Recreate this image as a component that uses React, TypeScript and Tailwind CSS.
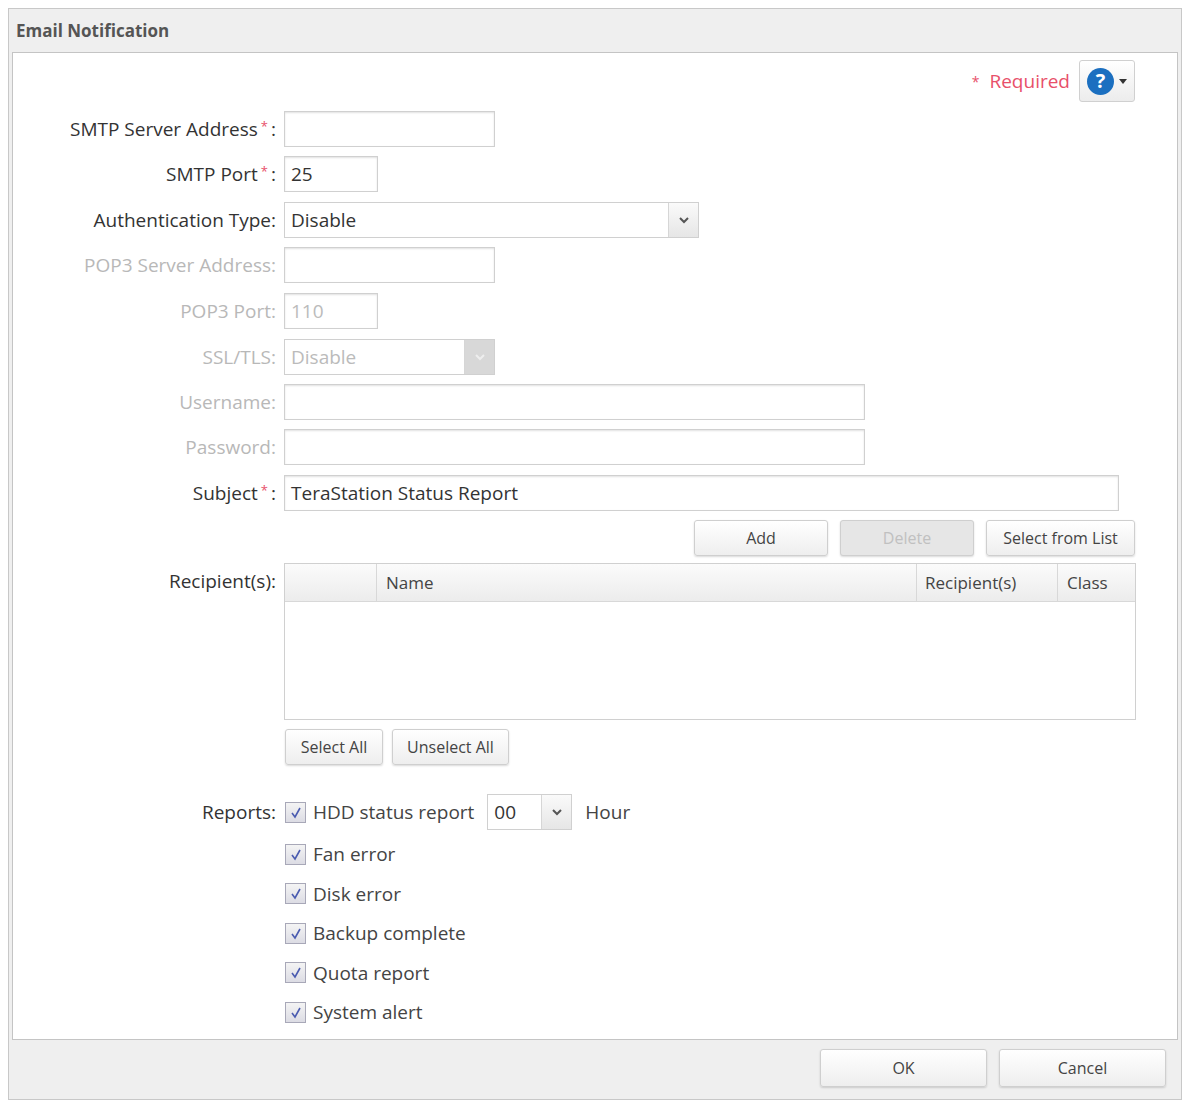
import React from "react";

const F = { fontFamily: '"Open Sans", "DejaVu Sans", sans-serif' };

function Label({ children, disabled, req }: { children: React.ReactNode; disabled?: boolean; req?: boolean }) {
  return (
    <div className={`w-[271px] shrink-0 text-right pr-[8px] text-[19px] ${disabled ? "text-[#b8b8b8]" : "text-[#333]"}`}>
      {children}
      {req && <span className="text-[#e8506a] text-[13px] align-top relative top-[2px] mx-[3px]">*</span>}
      {req ? ":" : ""}
    </div>
  );
}

function Input({ w, value, disabled }: { w: string; value?: string; disabled?: boolean }) {
  return (
    <div className={`${w} h-[36px] border border-[#d0d0d0] shadow-[inset_0_1px_2px_rgba(0,0,0,0.12)] bg-white flex items-center px-[6px] text-[19px] ${disabled ? "text-[#bbb]" : "text-[#333]"}`}>
      {value}
    </div>
  );
}

function Select({ w, value, disabled }: { w: string; value: string; disabled?: boolean }) {
  return (
    <div className={`${w} h-[36px] border border-[#d0d0d0] bg-white flex items-stretch text-[19px]`}>
      <div className={`flex-1 flex items-center px-[6px] ${disabled ? "text-[#bbb]" : "text-[#333]"}`}>{value}</div>
      <div className={`w-[30px] flex items-center justify-center border-l border-[#d6d6d6] ${disabled ? "bg-[#d8d8d8]" : "bg-gradient-to-b from-[#fafafa] to-[#e6e6e6]"}`}>
        <svg width="12" height="8" viewBox="0 0 12 8"><path d="M2 2l4 4 4-4" stroke={disabled ? "#eee" : "#555"} strokeWidth="2" fill="none" /></svg>
      </div>
    </div>
  );
}

function Btn({ w, children, disabled, h = "h-[36px]" }: { w: string; children: React.ReactNode; disabled?: boolean; h?: string }) {
  return (
    <div className={`${w} ${h} border border-[#cfcfcf] rounded-[3px] flex items-center justify-center text-[16px] shadow-[0_1px_2px_rgba(0,0,0,0.15)] ${disabled ? "bg-[#e6e6e6] text-[#c0c0c0]" : "bg-gradient-to-b from-white to-[#eeeeee] text-[#444]"}`}>
      {children}
    </div>
  );
}

function Check({ label }: { label: string }) {
  return (
    <div className="flex items-center">
      <div className="w-[21px] h-[21px] border border-[#a8a8b8] bg-gradient-to-b from-[#f4f4f4] to-[#dcdce4] flex items-center justify-center">
        <svg width="13" height="13" viewBox="0 0 13 13"><path d="M3 7l3 4 5-9" stroke="#4a5bb0" strokeWidth="1.6" fill="none" /></svg>
      </div>
      <span className="ml-[7px] text-[19px] text-[#444]">{label}</span>
    </div>
  );
}

export default function App() {
  return (
    <div style={F} className="w-[1185px] h-[1103px] bg-white pt-[8px] pl-[8px]">
      <div className="w-[1174px] h-[1092px] border border-[#c8c8c8] bg-[#efefef] flex flex-col">
        <div className="h-[43px] flex items-center pl-[7px] text-[17px] font-bold text-[#555]">Email Notification</div>
        <div className="mx-[3px] h-[988px] border border-[#c4c4c4] bg-white flex flex-col">
          <div className="flex justify-end items-center pr-[42px] mt-[7px] h-[42px]">
            <span className="text-[#e8506a] text-[14px] mr-[10px]">*</span>
            <span className="text-[#e8506a] text-[19px] mr-[9px]">Required</span>
            <div className="w-[56px] h-[42px] border border-[#d0d0d0] rounded-[3px] bg-gradient-to-b from-white to-[#ececec] flex items-center justify-center gap-[5px]">
              <div className="w-[27px] h-[27px] rounded-full bg-[#1b6fc0] text-white font-bold text-[20px] flex items-center justify-center leading-none">?</div>
              <svg width="8" height="5" viewBox="0 0 8 5"><path d="M0 0h8L4 5z" fill="#333" /></svg>
            </div>
          </div>

          <div className="flex items-center mt-[9px]"><Label req>SMTP Server Address</Label><Input w="w-[211px]" /></div>
          <div className="flex items-center mt-[9px]"><Label req>SMTP Port</Label><Input w="w-[94px]" value="25" /></div>
          <div className="flex items-center mt-[10px]"><Label>Authentication Type:</Label><Select w="w-[415px]" value="Disable" /></div>
          <div className="flex items-center mt-[9px]"><Label disabled>POP3 Server Address:</Label><Input w="w-[211px]" disabled /></div>
          <div className="flex items-center mt-[10px]"><Label disabled>POP3 Port:</Label><Input w="w-[94px]" value="110" disabled /></div>
          <div className="flex items-center mt-[10px]"><Label disabled>SSL/TLS:</Label><Select w="w-[211px]" value="Disable" disabled /></div>
          <div className="flex items-center mt-[9px]"><Label disabled>Username:</Label><Input w="w-[581px]" disabled /></div>
          <div className="flex items-center mt-[9px]"><Label disabled>Password:</Label><Input w="w-[581px]" disabled /></div>
          <div className="flex items-center mt-[10px]"><Label req>Subject</Label><Input w="w-[835px]" value="TeraStation Status Report" /></div>

          <div className="flex justify-end gap-[12px] pr-[42px] mt-[9px]">
            <Btn w="w-[134px]">Add</Btn>
            <Btn w="w-[134px]" disabled>Delete</Btn>
            <Btn w="w-[149px]">Select from List</Btn>
          </div>

          <div className="flex items-start mt-[7px]">
            <div className="w-[271px] shrink-0 text-right pr-[8px] text-[19px] text-[#333] pt-[4px]">Recipient(s):</div>
            <div className="w-[852px] h-[157px] border border-[#d0d0d0] flex flex-col">
              <div className="h-[38px] flex bg-gradient-to-b from-[#fbfbfb] to-[#ececec] border-b border-[#d8d8d8] text-[17px] text-[#444]">
                <div className="w-[92px] border-r border-[#d8d8d8]" />
                <div className="w-[540px] border-r border-[#d8d8d8] flex items-center pl-[9px]">Name</div>
                <div className="w-[141px] border-r border-[#d8d8d8] flex items-center pl-[8px]">Recipient(s)</div>
                <div className="flex-1 flex items-center pl-[9px]">Class</div>
              </div>
            </div>
          </div>

          <div className="flex gap-[9px] ml-[272px] mt-[9px]">
            <Btn w="w-[98px]">Select All</Btn>
            <Btn w="w-[117px]">Unselect All</Btn>
          </div>

          <div className="flex items-center mt-[29px]">
            <div className="w-[272px] shrink-0 text-right pr-[9px] text-[19px] text-[#333]">Reports:</div>
            <Check label="HDD status report" />
            <div className="ml-[13px]"><Select w="w-[85px]" value="00" /></div>
            <span className="ml-[13px] text-[19px] text-[#444]">Hour</span>
          </div>
          <div className="ml-[272px] flex flex-col gap-[11px] mt-[10px]">
            <Check label="Fan error" />
            <Check label="Disk error" />
            <Check label="Backup complete" />
            <Check label="Quota report" />
            <Check label="System alert" />
          </div>
        </div>
        <div className="flex justify-end gap-[12px] pr-[15px] mt-[9px]">
          <Btn w="w-[167px]" h="h-[38px]">OK</Btn>
          <Btn w="w-[167px]" h="h-[38px]">Cancel</Btn>
        </div>
      </div>
    </div>
  );
}
